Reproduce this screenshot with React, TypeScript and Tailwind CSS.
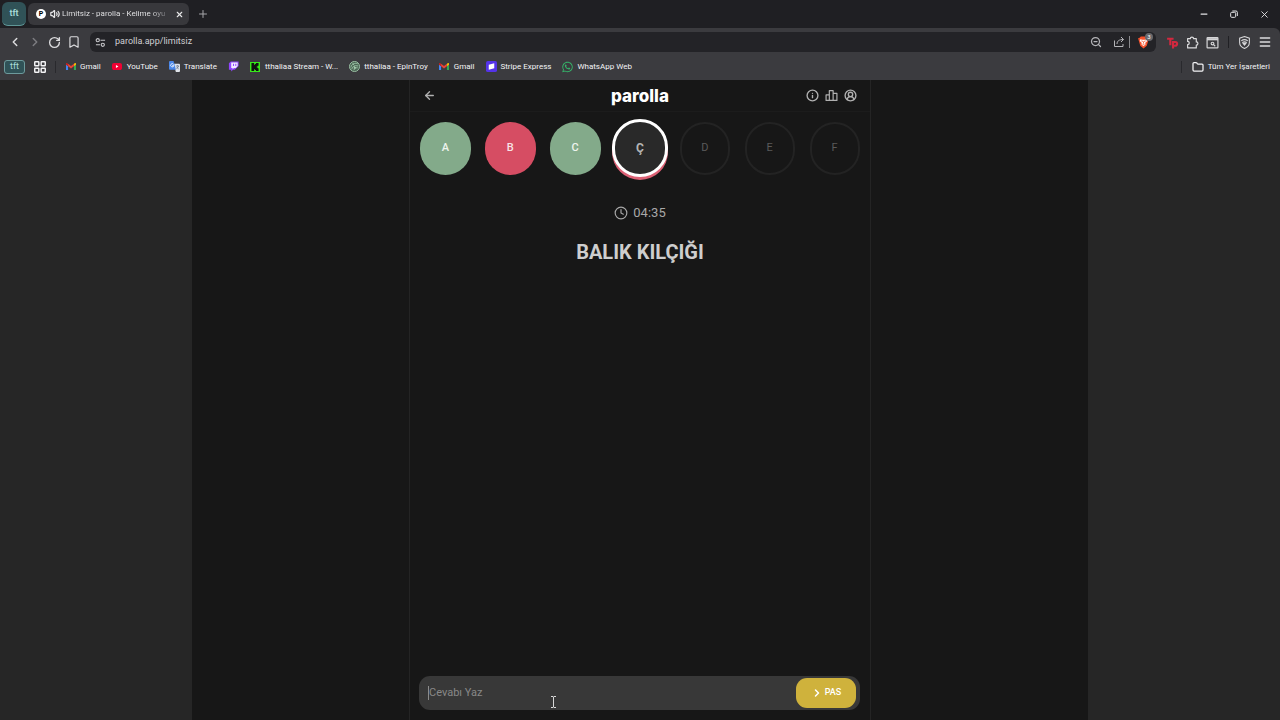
import type { ReactNode } from 'react'
import {
  ArrowLeft,
  ChevronLeft,
  ChevronRight,
  Bookmark,
  CircleUserRound,
  Clock,
  Folder,
  Info,
  LayoutGrid,
  Menu,
  Minus,
  Plus,
  RotateCw,
  Volume2,
  X,
  ZoomOut,
} from 'lucide-react'
import { SiKick } from 'react-icons/si'
import { FaWhatsapp } from 'react-icons/fa'

type LetterStatus = 'correct' | 'wrong' | 'active' | 'idle'

const LETTERS: { char: string; status: LetterStatus }[] = [
  { char: 'A', status: 'correct' },
  { char: 'B', status: 'wrong' },
  { char: 'C', status: 'correct' },
  { char: 'Ç', status: 'active' },
  { char: 'D', status: 'idle' },
  { char: 'E', status: 'idle' },
  { char: 'F', status: 'idle' },
]

const LETTER_STYLES: Record<LetterStatus, string> = {
  correct: 'h-[53px] w-[51px] bg-[#83aa8a] pt-px text-[11px] font-medium text-[#eef4ee]',
  wrong: 'h-[53px] w-[51px] bg-[#d64d63] pt-px text-[11px] font-medium text-[#f7e3e6]',
  active: 'h-[58px] w-[56px] border-[3px] border-white bg-[#292929] text-xs font-bold text-[#b5b5b5] shadow-[0_3px_0_#dc6175]',
  idle: 'h-[53px] w-[50px] border-2 border-[#232323] pt-px text-[11px] text-[#5a5a5a]',
}

function GmailIcon() {
  return (
    <svg viewBox="0 0 24 18" className="w-[10px]">
      <path d="M0 3v13a2 2 0 0 0 2 2h3V7z" fill="#4285f4" />
      <path d="M24 3v13a2 2 0 0 1-2 2h-3V7z" fill="#34a853" />
      <path d="M19 2v6l5-4V2c0-2-2-3-4-1z" fill="#fbbc04" />
      <path d="M5 2v6l7 5 7-5V2l-7 5z" fill="#ea4335" />
      <path d="M0 2v2l5 4V2L4 1C2-1 0 0 0 2z" fill="#c5221f" />
    </svg>
  )
}

function YouTubeIcon() {
  return (
    <svg viewBox="0 0 24 17" className="w-[10px]">
      <rect width="24" height="17" rx="5" fill="#f00033" />
      <path d="M9.500 5v7l6-3.500z" fill="#fff" />
    </svg>
  )
}

function TranslateIcon() {
  return (
    <svg viewBox="0 0 24 24" className="w-[11px]">
      <path d="M10 6h12a2 2 0 0 1 2 2v14a2 2 0 0 1-2 2h-7z" fill="#dfe3ea" />
      <path d="M2 0h8l5 19H2a2 2 0 0 1-2-2V2a2 2 0 0 1 2-2z" fill="#4b87e8" />
      <path d="M10 7.500A3.500 3.500 0 1 0 10.500 10H7" fill="none" stroke="#fff" strokeWidth="1.800" />
      <path d="M15 11h7M18.500 9v2M21 11c-1 3-3 5-5 6M17 13l4 5" fill="none" stroke="#5b6b85" strokeWidth="1.500" />
    </svg>
  )
}

function TwitchIcon() {
  return (
    <svg viewBox="0 0 24 24" className="w-[11px]">
      <path d="M6 1L2 5v14h5v4l4-4h4l8-8V1z" fill="#9146ff" />
      <path d="M7 3h14v8l-4 4h-4l-3 3v-3H7z" fill="#f2ecff" />
      <path d="M12 6v5M17 6v5" stroke="#9146ff" strokeWidth="2.200" />
    </svg>
  )
}

function KickIcon() {
  return (
    <span className="flex h-[10px] w-[10px] items-center justify-center bg-[#37e81a] text-[#101010]">
      <SiKick size={8} />
    </span>
  )
}

function EpinIcon() {
  return (
    <svg viewBox="0 0 24 24" className="w-[11px]" fill="none" stroke="#9fc6a8" strokeWidth="2">
      <circle cx="12" cy="12" r="11" fill="#4b6654" />
      <path d="M4 14c2-8 8-10 15-8M6 18c2-7 6-9 14-7M11 20c0-4 3-6 8-5M8 5l3 4" />
      <path d="M12 12l3 3-4 1z" fill="#dcefe0" />
    </svg>
  )
}

function StripeIcon() {
  return (
    <svg viewBox="0 0 24 24" className="w-[11px]">
      <rect width="24" height="24" rx="4" fill="#5433e8" />
      <path d="M6 8l12-3v11L6 19z" fill="#fff" />
    </svg>
  )
}

function SiteSettingsIcon() {
  return (
    <svg viewBox="0 0 24 24" className="w-[11px]" fill="none" stroke="#c8c8cc" strokeWidth="2.400">
      <circle cx="6" cy="7" r="3.500" />
      <path d="M12 7h10M2 17h9" />
      <circle cx="17" cy="17" r="3.500" />
    </svg>
  )
}

function ShareIcon() {
  return (
    <svg viewBox="0 0 24 24" className="w-3" fill="none" stroke="#b4b4b8" strokeWidth="2">
      <path d="M3 9v12h17v-5M8 16c0-6 4-9 13-9M16 2l5 5-5 5" />
    </svg>
  )
}

function BraveIcon() {
  return (
    <svg viewBox="0 0 24 24" className="w-[13px]">
      <path d="M7 1h10l2 2 3 1-1 4-3 10-6 5-6-5L3 8 2 4l3-1z" fill="#f4512c" />
      <path d="M6 6l4 1h4l4-1 1 3-4 4 1 2-4 4-4-4 1-2-4-4z" fill="#fff" />
      <path d="M8 9l3 1M16 9l-3 1M12 10v4M10 15l2 1 2-1" stroke="#f4512c" strokeWidth="1.500" fill="none" />
    </svg>
  )
}

function TpIcon() {
  return (
    <svg viewBox="0 0 24 24" className="w-[13px]" fill="none" stroke="#d2283f" strokeWidth="4">
      <path d="M2 5h12M8 5v12M13 23V11h4a3.500 3.500 0 0 1 0 7h-4" />
    </svg>
  )
}

function PuzzleIcon() {
  return (
    <svg viewBox="0 0 24 24" className="w-[13px]" fill="none" stroke="#dcdcde" strokeWidth="2.200" strokeLinejoin="round">
      <path d="M3 5h5a3 3 0 1 1 6 0h5v6a3 3 0 1 1 0 6v5H3v-6a3 3 0 1 0 0-6z" />
    </svg>
  )
}

function RestoreIcon() {
  return (
    <svg viewBox="0 0 24 24" className="w-2" fill="none" stroke="#e4e4e6" strokeWidth="3">
      <rect x="2" y="7" width="15" height="15" rx="3" />
      <path d="M7 3h11a4 4 0 0 1 4 4v11" />
    </svg>
  )
}

function WalletIcon() {
  return (
    <svg viewBox="0 0 24 24" className="w-[13px]" fill="none" stroke="#d6d6d8" strokeWidth="2.200">
      <rect x="2" y="3" width="20" height="19" rx="1" />
      <path d="M2 6h20" strokeWidth="4" />
      <circle cx="12" cy="14" r="2.500" />
      <path d="M14 16l3 3" />
    </svg>
  )
}

function ShieldIcon() {
  return (
    <svg viewBox="0 0 24 24" className="w-[13px]" fill="none" stroke="#d6d6d8" strokeWidth="2">
      <path d="M12 1l9 3v8c0 5-4 9-9 11-5-2-9-6-9-11V4z" />
      <path d="M6 9c4-3 8-3 12 0M8 12c3-2 5-2 8 0" />
      <path d="M9 13h6l-3 4z" fill="#d6d6d8" />
    </svg>
  )
}

function PodiumIcon() {
  return (
    <svg viewBox="0 0 24 24" className="w-[13px]" fill="none" stroke="currentColor" strokeWidth="2.200" strokeLinejoin="round">
      <path d="M8 21V3h7v18M8 11H2v10h20V8h-7" />
    </svg>
  )
}

const BOOKMARKS: { label: string; name?: string; icon: ReactNode }[] = [
  { label: 'Gmail', icon: <GmailIcon /> },
  { label: 'YouTube', icon: <YouTubeIcon /> },
  { label: 'Translate', icon: <TranslateIcon /> },
  { label: '', name: 'Twitch', icon: <TwitchIcon /> },
  { label: 'tthaliaa Stream - W...', icon: <KickIcon /> },
  { label: 'tthaliaa - EpinTroy', icon: <EpinIcon /> },
  { label: 'Gmail', icon: <GmailIcon /> },
  { label: 'Stripe Express', icon: <StripeIcon /> },
  { label: 'WhatsApp Web', icon: <FaWhatsapp size={12} color="#35b56a" /> },
]

function TabStrip() {
  return (
    <div className="flex h-7 items-center bg-[#1f1f23] px-[2px]">
      <button className="h-6 w-6 rounded-md border-b border-[#5f9696] bg-[#305257] text-[9px] font-semibold text-[#a9dcd9]">tft</button>
      <div className="ml-[2px] flex h-[22px] w-[161px] items-center rounded-md bg-[#38383c] pl-2 pr-1 text-[#e8e8ea]">
        <span className="flex h-[10px] w-[10px] shrink-0 items-center justify-center rounded-full bg-white text-[7px] font-bold text-black">P</span>
        <Volume2 size={10} strokeWidth={3} className="ml-1 shrink-0" />
        <span className="ml-[2px] bg-linear-to-r from-[#eeeef0] from-85% to-[#6a6a6e] bg-clip-text whitespace-nowrap text-transparent">
          Limitsiz - parolla - Kelime oyu
        </span>
        <button aria-label="Close tab" className="ml-auto flex w-3 justify-center"><X size={9} strokeWidth={3} /></button>
      </div>
      <button aria-label="New tab" className="ml-2 text-[#a6a6aa]"><Plus size={12} /></button>
      <div className="ml-auto flex items-center gap-[21px] pr-2 text-[#e4e4e6]">
        <button aria-label="Minimize"><Minus size={10} strokeWidth={3} /></button>
        <button aria-label="Restore"><RestoreIcon /></button>
        <button aria-label="Close window"><X size={11} /></button>
      </div>
    </div>
  )
}

function Toolbar() {
  return (
    <div className="bg-[#1f1f23]">
      <div className="flex h-7 items-center rounded-tr-md bg-[#3b3b3f] pl-2 pr-2 text-[#dcdcde]">
        <div className="flex items-center gap-[6px]">
          <button aria-label="Back"><ChevronLeft size={14} strokeWidth={2.5} /></button>
          <button aria-label="Forward" className="text-[#7c7c80]"><ChevronRight size={14} strokeWidth={2.5} /></button>
          <button aria-label="Reload"><RotateCw size={13} strokeWidth={2.5} /></button>
          <button aria-label="Bookmark"><Bookmark size={14} /></button>
        </div>
        <div className="ml-[9px] flex h-5 flex-1 items-center rounded-md bg-[#232327] pl-[5px] pr-[3px]">
          <SiteSettingsIcon />
          <input
            aria-label="Address"
            defaultValue="parolla.app/limitsiz"
            className="ml-[9px] min-w-0 flex-1 bg-transparent text-[9px] text-[#d0d0d4] outline-none"
          />
          <button aria-label="Zoom" className="text-[#b4b4b8]"><ZoomOut size={12} strokeWidth={2.5} /></button>
          <button aria-label="Share" className="ml-[11px]"><ShareIcon /></button>
          <span className="ml-1 h-3 w-px bg-[#8a8a8e]" />
          <button aria-label="Brave Shields" className="relative ml-[7px] flex w-[16px]">
            <BraveIcon />
            <span className="absolute -top-[3px] left-[8px] h-2 w-2 rounded-full bg-[#68686c] text-center text-[6px] leading-[8px] text-white">3</span>
          </button>
        </div>
        <div className="ml-[10px] flex items-center gap-[7px]">
          <button aria-label="Tp"><TpIcon /></button>
          <button aria-label="Extensions"><PuzzleIcon /></button>
          <button aria-label="Wallet"><WalletIcon /></button>
          <span className="mx-[2px] h-3 w-px bg-[#202024]" />
          <button aria-label="VPN"><ShieldIcon /></button>
          <button aria-label="Menu"><Menu size={14} strokeWidth={2.5} /></button>
        </div>
      </div>
    </div>
  )
}

function BookmarkBar() {
  return (
    <div className="flex h-6 items-center bg-[#3b3b3f] pb-[3px] pl-1 pr-[10px] text-[#f4f4f6]">
      <button className="h-[14px] w-[21px] rounded-[3px] border border-[#6d9a9c] bg-[#305257] text-[9px] leading-[11px] text-[#a9dcd9]">tft</button>
      <button aria-label="Apps" className="ml-2"><LayoutGrid size={14} strokeWidth={2.5} /></button>
      <span className="ml-2 h-3 w-px bg-[#29292d]" />
      <nav className="ml-[9px] flex items-center gap-[11px]">
        {BOOKMARKS.map((bookmark, i) => (
          <a key={i} href="#" aria-label={bookmark.name} className="flex items-center gap-1 whitespace-nowrap">
            <span className="flex w-[11px] justify-center">{bookmark.icon}</span>
            {bookmark.label}
          </a>
        ))}
      </nav>
      <span className="ml-auto h-3 w-px bg-[#29292d]" />
      <button className="ml-[10px] flex items-center gap-1">
        <Folder size={12} strokeWidth={2.5} />
        Tüm Yer İşaretleri
      </button>
    </div>
  )
}

function Game() {
  return (
    <main className="relative mx-auto flex w-[462px] max-w-full flex-col border-x border-[#242424]">
      <header className="grid h-8 grid-cols-3 items-center border-b border-[#1c1c1c] pl-[13px] pr-[13px] text-[#b0b0b0]">
        <button aria-label="Geri" className="justify-self-start"><ArrowLeft size={13} strokeWidth={2.5} /></button>
        <h1 className="justify-self-center font-[Inter,sans-serif] text-[17px] leading-6 font-extrabold text-white">parolla</h1>
        <div className="flex items-center gap-[6px] justify-self-end">
          <button aria-label="Bilgi"><Info size={13} strokeWidth={2.5} /></button>
          <button aria-label="Skor"><PodiumIcon /></button>
          <button aria-label="Profil"><CircleUserRound size={13} strokeWidth={2.5} /></button>
        </div>
      </header>

      <div className="mt-[6px] grid h-[60px] grid-cols-7 items-center px-[3px]">
        {LETTERS.map(letter => (
          <div
            key={letter.char}
            className={`flex items-center justify-center justify-self-center rounded-full ${LETTER_STYLES[letter.status]}`}
          >
            {letter.char}
          </div>
        ))}
      </div>

      <div className="mt-[25px] flex h-5 items-center justify-center gap-[5px] text-[13px] text-[#a8a8a8]">
        <Clock size={14} />
        <span>04:35</span>
      </div>
      <p className="mt-[15px] text-center text-xl leading-7 font-bold text-[#cecece]">BALIK KILÇIĞI</p>

      <form className="mr-[10px] ml-[9px] mt-auto mb-[10px] flex h-[34px] items-center rounded-[11px] bg-[#383838] pr-1 pl-[9px]">
        <span className="h-[14px] w-px bg-[#8c8c8c]" />
        <input
          aria-label="Cevabı Yaz"
          placeholder="Cevabı Yaz"
          className="min-w-0 flex-1 bg-transparent text-[11px] leading-4 text-white outline-none placeholder:text-[#888888]"
        />
        <button type="button" className="flex h-[30px] w-[60px] items-center justify-center gap-[2px] rounded-[11px] bg-[#cfb23c] text-[9px] font-medium text-white">
          <ChevronRight size={12} strokeWidth={3} />
          PAS
        </button>
      </form>

      <svg viewBox="0 0 7 12" className="absolute bottom-3 left-[140px] h-3 w-[7px]" fill="none" stroke="#d8d8d8">
        <path d="M1 .5h2l.5.5.5-.5h2M3.500 1v10M1 11.500h2l.5-.5.5.5h2" />
      </svg>
    </main>
  )
}

export default function App() {
  return (
    <div className="flex h-screen flex-col overflow-hidden bg-[#262626] font-[Roboto,sans-serif] text-[8px]">
      <TabStrip />
      <Toolbar />
      <BookmarkBar />
      <div className="mx-[15%] flex flex-1 bg-[#171717]">
        <Game />
      </div>
    </div>
  )
}
